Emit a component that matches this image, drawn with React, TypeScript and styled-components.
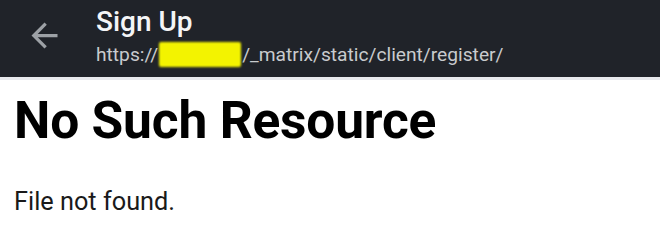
import React from 'react';
import styled, { createGlobalStyle } from 'styled-components';

const GlobalStyle = createGlobalStyle`
  html, body {
    margin: 0;
    padding: 0;
    background: #ffffff;
    font-family: Roboto, "Liberation Sans", Arial, sans-serif;
  }
`;

const Page = styled.div`
  width: 660px;
  height: 252px;
  overflow: hidden;
  background: #ffffff;
`;

const TopBar = styled.header`
  height: 77px;
  background: #202329;
  border-bottom: 3px solid #e8eaed;
  display: flex;
  align-items: flex-start;
  padding-left: 25px;
`;

const BackButton = styled.div`
  width: 39px;
  height: 39px;
  margin-top: 16px;
  margin-right: 32px;
  color: #9da1a6;
  flex-shrink: 0;

  svg {
    display: block;
    width: 39px;
    height: 39px;
  }
`;

const TitleBlock = styled.div`
  display: flex;
  flex-direction: column;
  padding-top: 8px;
`;

const Title = styled.div`
  color: #f4f5f6;
  font-size: 28px;
  font-weight: 500;
  line-height: 28px;
`;

const UrlRow = styled.div`
  display: flex;
  align-items: center;
  height: 25px;
  margin-top: 6px;
  color: #c9cbce;
  font-size: 19.2px;
  line-height: 19px;
  white-space: nowrap;
`;

const Redacted = styled.span`
  display: inline-block;
  width: 82px;
  height: 25px;
  margin: 0 1px;
  background: #f3f300;
  border-radius: 2px;
  filter: blur(0.8px);
`;

const Content = styled.main`
  padding: 15px 14px 0;
`;

const Heading = styled.h1`
  margin: 0;
  font-size: 51.5px;
  font-weight: 700;
  line-height: 52px;
  color: #000000;
  letter-spacing: -0.2px;
`;

const Message = styled.p`
  margin: 42px 0 0;
  font-size: 25.3px;
  line-height: 25px;
  color: #1a1a1a;
`;

export default function App() {
  return (
    <>
      <GlobalStyle />
      <Page>
        <TopBar>
          <BackButton>
            <svg viewBox="0 0 24 24" fill="currentColor">
              <path d="M20 11H7.83l5.59-5.59L12 4l-8 8 8 8 1.41-1.41L7.83 13H20v-2z" />
            </svg>
          </BackButton>
          <TitleBlock>
            <Title>Sign Up</Title>
            <UrlRow>
              https://
              <Redacted />
              /_matrix/static/client/register/
            </UrlRow>
          </TitleBlock>
        </TopBar>
        <Content>
          <Heading>No Such Resource</Heading>
          <Message>File not found.</Message>
        </Content>
      </Page>
    </>
  );
}
